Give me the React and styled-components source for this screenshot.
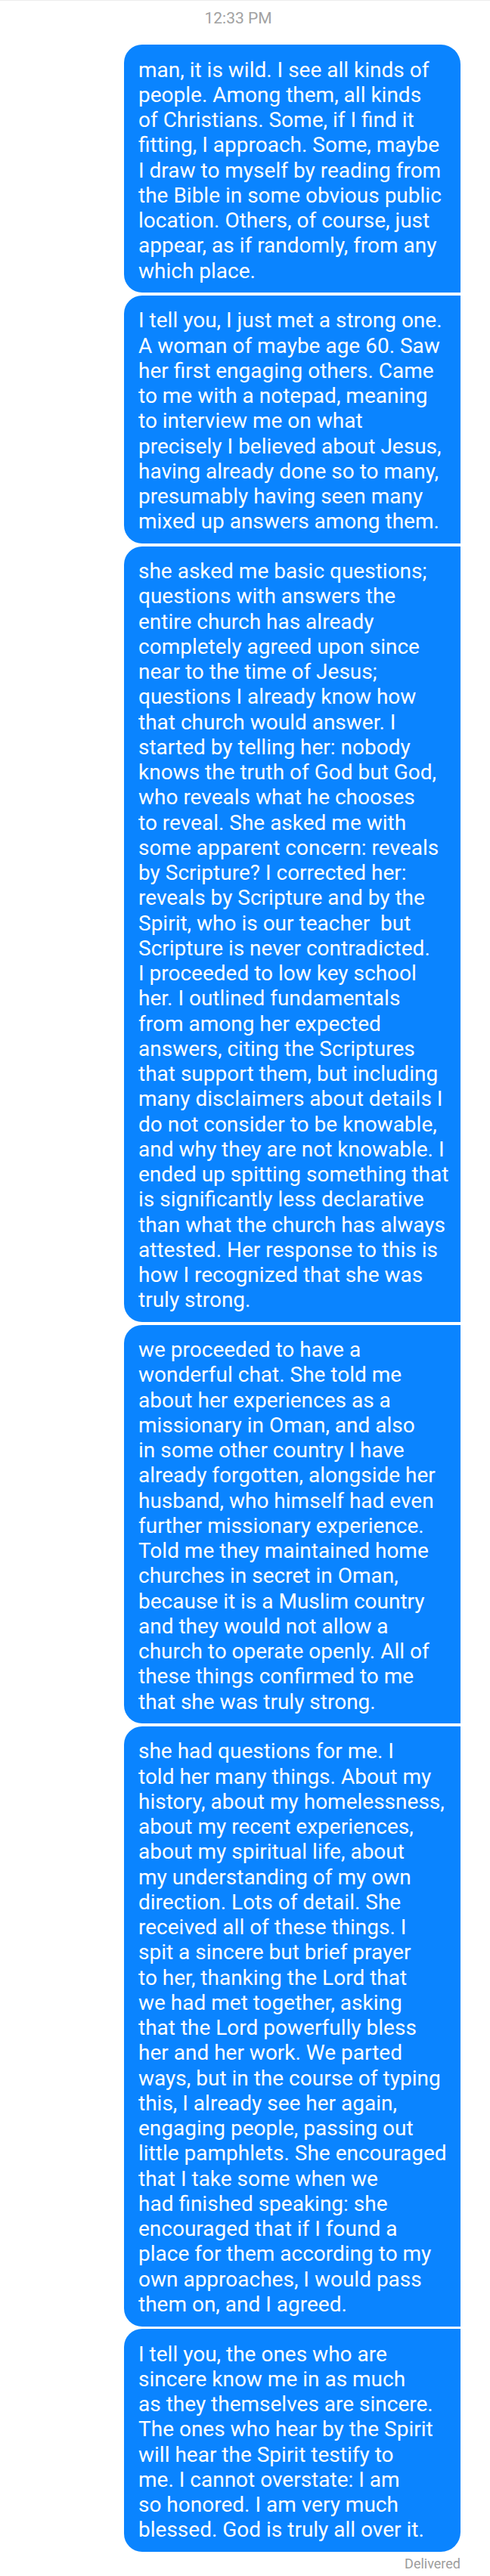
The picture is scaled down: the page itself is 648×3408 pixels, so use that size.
import React from 'react';
import styled, { createGlobalStyle } from 'styled-components';

const GlobalStyle = createGlobalStyle`
  html, body {
    margin: 0;
    padding: 0;
    background: #ffffff;
  }
  body {
    font-family: Roboto, "Noto Sans", "Liberation Sans", sans-serif;
    -webkit-font-smoothing: antialiased;
  }
`;

const Screen = styled.div`
  width: 648px;
  min-height: 3408px;
  box-sizing: border-box;
  border-top: 1px solid #ececec;
  background: #ffffff;
`;

const TimeStamp = styled.div`
  padding: 11px 18px 0 0;
  height: 36px;
  text-align: center;
  font-size: 21px;
  line-height: 25px;
  color: #a2a2a2;
`;

const Thread = styled.div`
  display: flex;
  flex-direction: column;
  align-items: flex-end;
  gap: 3.5px;
  padding: 11px 39px 0 0;
`;

const Bubble = styled.div`
  box-sizing: border-box;
  width: 445px;
  padding: 16.5px 14px 12.5px 19px;
  background: #0a84ff;
  color: #ffffff;
  font-size: 28px;
  line-height: 33.25px;
  white-space: pre;
  border-radius: 24px ${({ $first }) => ($first ? '26px' : '0')}
    ${({ $last }) => ($last ? '26px' : '0')} 24px;
`;

const Status = styled.div`
  margin: 5px 39px 0 0;
  text-align: right;
  font-size: 18px;
  color: #9d9d9d;
`;

const messages = [
  `man, it is wild. I see all kinds of
people. Among them, all kinds
of Christians. Some, if I find it
fitting, I approach. Some, maybe
I draw to myself by reading from
the Bible in some obvious public
location. Others, of course, just
appear, as if randomly, from any
which place.`,
  `I tell you, I just met a strong one.
A woman of maybe age 60. Saw
her first engaging others. Came
to me with a notepad, meaning
to interview me on what
precisely I believed about Jesus,
having already done so to many,
presumably having seen many
mixed up answers among them.`,
  `she asked me basic questions;
questions with answers the
entire church has already
completely agreed upon since
near to the time of Jesus;
questions I already know how
that church would answer. I
started by telling her: nobody
knows the truth of God but God,
who reveals what he chooses
to reveal. She asked me with
some apparent concern: reveals
by Scripture? I corrected her:
reveals by Scripture and by the
Spirit, who is our teacher  but
Scripture is never contradicted.
I proceeded to low key school
her. I outlined fundamentals
from among her expected
answers, citing the Scriptures
that support them, but including
many disclaimers about details I
do not consider to be knowable,
and why they are not knowable. I
ended up spitting something that
is significantly less declarative
than what the church has always
attested. Her response to this is
how I recognized that she was
truly strong.`,
  `we proceeded to have a
wonderful chat. She told me
about her experiences as a
missionary in Oman, and also
in some other country I have
already forgotten, alongside her
husband, who himself had even
further missionary experience.
Told me they maintained home
churches in secret in Oman,
because it is a Muslim country
and they would not allow a
church to operate openly. All of
these things confirmed to me
that she was truly strong.`,
  `she had questions for me. I
told her many things. About my
history, about my homelessness,
about my recent experiences,
about my spiritual life, about
my understanding of my own
direction. Lots of detail. She
received all of these things. I
spit a sincere but brief prayer
to her, thanking the Lord that
we had met together, asking
that the Lord powerfully bless
her and her work. We parted
ways, but in the course of typing
this, I already see her again,
engaging people, passing out
little pamphlets. She encouraged
that I take some when we
had finished speaking: she
encouraged that if I found a
place for them according to my
own approaches, I would pass
them on, and I agreed.`,
  `I tell you, the ones who are
sincere know me in as much
as they themselves are sincere.
The ones who hear by the Spirit
will hear the Spirit testify to
me. I cannot overstate: I am
so honored. I am very much
blessed. God is truly all over it.`,
];

export default function App() {
  return (
    <>
      <GlobalStyle />
      <Screen>
        <TimeStamp>12:33 PM</TimeStamp>
        <Thread>
          {messages.map((text, i) => (
            <Bubble key={i} $first={i === 0} $last={i === messages.length - 1}>
              {text}
            </Bubble>
          ))}
        </Thread>
        <Status>Delivered</Status>
      </Screen>
    </>
  );
}
